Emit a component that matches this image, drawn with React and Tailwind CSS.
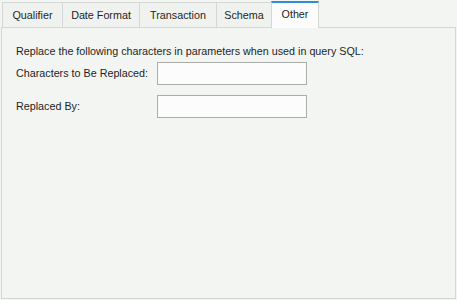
import React from "react";

const tabs = [
  { label: "Qualifier", w: "w-[61px]" },
  { label: "Date Format", w: "w-[78px]" },
  { label: "Transaction", w: "w-[78px]" },
  { label: "Schema", w: "w-[56px]" },
  { label: "Other", w: "w-[48px]", active: true },
];

const Field = ({ label }) => (
  <div className="flex items-center h-[23px]">
    <span className="w-[141px] shrink-0 whitespace-nowrap">{label}</span>
    <div className="w-[150px] h-[23px] border border-[#abadab] bg-[#fbfcfb]" />
  </div>
);

const App = () => {
  return (
    <div
      className="w-[457px] h-[300px] bg-[#f3f5f2] flex flex-col pt-px px-px pb-px text-[10.75px] text-[#1e1e1e]"
      style={{ fontFamily: "'Liberation Sans', Arial, sans-serif" }}
    >
      <div className="flex items-end h-[26px] pl-px relative z-10">
        {tabs.map((t, i) =>
          t.active ? (
            <div
              key={t.label}
              className={`${t.w} h-[27px] -mb-px -ml-px bg-[#fbfcfb] border-x border-[#d5d7d4] border-t-2 border-t-[#2b90d9] flex items-center justify-center pb-[3px]`}
            >
              {t.label}
            </div>
          ) : (
            <div
              key={t.label}
              className={`${t.w} h-[25px] ${i > 0 ? "-ml-px" : ""} bg-[#f0f2ef] border border-b-0 border-[#d5d7d4] flex items-center justify-center pt-px`}
            >
              {t.label}
            </div>
          )
        )}
      </div>
      <div className="flex-1 border border-[#d5d7d4] bg-[#f3f5f2] pl-[14px] pt-[15px]">
        <p className="h-[16px] leading-[16px] whitespace-nowrap">
          Replace the following characters in parameters when used in query SQL:
        </p>
        <div className="flex flex-col gap-[10px] mt-[3px]">
          <Field label="Characters to Be Replaced:" />
          <Field label="Replaced By:" />
        </div>
      </div>
    </div>
  );
};

export default App;
